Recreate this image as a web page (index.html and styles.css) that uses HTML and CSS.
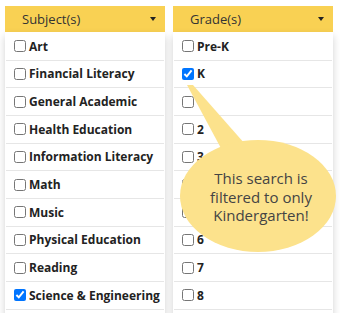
FILE: index.html
```html
<!DOCTYPE html>
<html lang="en">
<head>
  <meta charset="UTF-8" />
  <title>Search Filters</title>
  <link rel="stylesheet" href="styles.css">
</head>
<body>
  <div class="filters">
    <div class="select">
      <div class="select-toggle">Subject(s) <span class="caret"></span></div>
      <ul class="menu">
        <li><label><input type="checkbox"> Art</label></li>
        <li><label><input type="checkbox"> Financial Literacy</label></li>
        <li><label><input type="checkbox"> General Academic</label></li>
        <li><label><input type="checkbox"> Health Education</label></li>
        <li><label><input type="checkbox"> Information Literacy</label></li>
        <li><label><input type="checkbox"> Math</label></li>
        <li><label><input type="checkbox"> Music</label></li>
        <li><label><input type="checkbox"> Physical Education</label></li>
        <li><label><input type="checkbox"> Reading</label></li>
        <li><label><input type="checkbox" checked> Science &amp; Engineering</label></li>
      </ul>
    </div>

    <div class="select">
      <div class="select-toggle">Grade(s) <span class="caret"></span></div>
      <ul class="menu">
        <li><label><input type="checkbox"> Pre-K</label></li>
        <li><label><input type="checkbox" checked> K</label></li>
        <li><label><input type="checkbox"> 1</label></li>
        <li><label><input type="checkbox"> 2</label></li>
        <li><label><input type="checkbox"> 3</label></li>
        <li><label><input type="checkbox"> 4</label></li>
        <li><label><input type="checkbox"> 5</label></li>
        <li><label><input type="checkbox"> 6</label></li>
        <li><label><input type="checkbox"> 7</label></li>
        <li><label><input type="checkbox"> 8</label></li>
      </ul>
    </div>

    <!-- speech bubble pointing at the K checkbox -->
    <div class="callout">
      <svg width="170" height="180" viewBox="0 0 170 180">
        <path d="M14 3 L20 3 L72 62 L50 70 Z" fill="#fce28c"/>
        <ellipse cx="85" cy="114" rx="78" ry="56" fill="#fce28c"/>
      </svg>
      <p class="callout-text">This search is<br>filtered to only<br>Kindergarten!</p>
    </div>
  </div>
</body>
</html>
```

FILE: styles.css
```css
* {
  box-sizing: border-box;
}

body {
  margin: 0;
  background: #ffffff;
  font-family: 'Open Sans', 'Liberation Sans', sans-serif;
  color: #222;
  overflow: hidden;
}

.filters {
  position: relative;
  display: grid;
  grid-template-columns: 160px 160px;
  gap: 8px;
  padding: 6px 5px;
}

.select-toggle {
  height: 26px;
  display: flex;
  align-items: center;
  justify-content: space-between;
  padding: 0 9px 0 17px;
  background: #f9d153;
  font-size: 13px;
  color: #333;
}

.caret {
  width: 0;
  height: 0;
  border-top: 4px solid #222;
  border-left: 3.5px solid transparent;
  border-right: 3.5px solid transparent;
}

.menu {
  list-style: none;
  margin: 0;
  padding: 1px 1px 20px;
  background: #fff;
  box-shadow: 0 4px 8px rgba(0, 0, 0, 0.18);
}

.menu li {
  height: 27.67px;
  border-bottom: 1px solid #e6e6e6;
}

.menu label {
  display: flex;
  align-items: center;
  height: 100%;
  padding-left: 8px;
  font-size: 12px;
  font-weight: 700;
  white-space: nowrap;
}

.menu input {
  width: 12px;
  height: 12px;
  margin: 0 3px 0 0;
}

.callout {
  position: absolute;
  left: 173px;
  top: 82px;
  width: 170px;
  height: 180px;
}

.callout svg {
  display: block;
}

.callout-text {
  position: absolute;
  left: 10px;
  top: 87px;
  width: 156px;
  margin: 0;
  text-align: center;
  font-size: 15px;
  line-height: 18.5px;
  color: #444;
}
```
